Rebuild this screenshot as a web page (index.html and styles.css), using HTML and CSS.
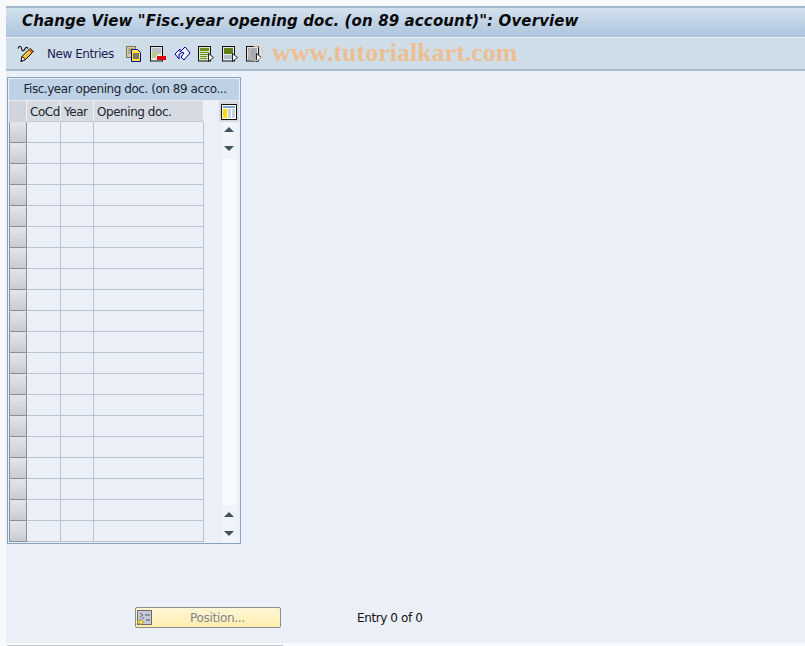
FILE: index.html
```html
<!DOCTYPE html>
<html lang="en">
<head>
<meta charset="utf-8">
<title>Change View</title>
<link rel="stylesheet" href="styles.css">
</head>
<body>
<div class="window">
  <header class="title-bar"><h1>Change View "Fisc.year opening doc. (on 89 account)": Overview</h1></header>
  <div class="toolbar">
    <svg class="ico-pen" width="18" height="18" viewBox="0 0 18 18"><path d="M4 16.500l1-5 8-8 3.500 3-8 8z" fill="#f7bd30" stroke="#111"/><path d="M4 16.500l1-5 3.500 3z" fill="#fff" stroke="#111"/><path d="M7 11l6-6" stroke="#fbe08a"/><path d="M12.500 4.500l3 3" stroke="#c0561c" stroke-width="2"/><path d="M1 3.500c1-3 3-3 3.500 0s2 3 3 1 2-3 3.500-1" fill="none" stroke="#111" stroke-width="1.200"/></svg>
    <span class="new-entries">New Entries</span>
    <span class="icons">
      <svg width="16" height="16" viewBox="0 0 16 16"><rect x="0.500" y="0.500" width="9" height="11" fill="#d9cc96" stroke="#74745f"/><path d="M2 3h6M2 5h6M2 7h3" stroke="#8a8a70"/><path d="M5.500 3.500h6l3 3v9h-9z" fill="#ffea3a" stroke="#00009c"/><path d="M7 8h6M7 10h6M7 12h6" stroke="#00009c"/></svg>
      <svg width="16" height="16" viewBox="0 0 16 16"><rect x="0.500" y="0.500" width="12" height="14.500" fill="#e6eaf0" stroke="#111"/><path d="M2 3h9M2 5h9" stroke="#8a93a0"/><path d="M2 7h9M2 9h5M2 11h4" stroke="#86a830"/><rect x="7" y="10" width="9" height="4" fill="#e00010"/></svg>
      <svg width="17" height="16" viewBox="0 0 17 16"><path d="M1 8l5-5v3l5-5 5 6-6 7-3-3 3-4-2-1-2 2h-1v5z" fill="#f4f6fa" stroke="#00009c" stroke-linejoin="round"/></svg>
      <svg width="16" height="16" viewBox="0 0 16 16"><rect x="0.500" y="0.500" width="12" height="14.500" fill="#dde5cc" stroke="#111"/><rect x="2" y="2" width="9" height="3" fill="#6e8f1c"/><path d="M2 6.500h9M2 8.500h9M2 10.500h7M2 12.500h7" stroke="#6e8f1c"/><path d="M10.500 7.500v8l5-4z" fill="#fff" stroke="#222"/></svg>
      <svg width="16" height="16" viewBox="0 0 16 16"><rect x="0.500" y="0.500" width="12" height="14.500" fill="#e6eaf0" stroke="#111"/><rect x="2" y="2" width="9" height="6" fill="#5f8216"/><path d="M2 10h8M2 12h8" stroke="#7890a0"/><path d="M10.500 7.500v8l5-4z" fill="#fff" stroke="#222"/></svg>
      <svg width="16" height="16" viewBox="0 0 16 16"><rect x="0.500" y="0.500" width="12" height="14.500" fill="#e6eaf0" stroke="#111"/><path d="M2 3h9M2 5h9M2 7h9M2 9h8M2 11h8M2 13h8" stroke="#667"/><path d="M10.500 7.500v8l5-4z" fill="#fff" stroke="#222"/><circle cx="10" cy="7.500" r="7" fill="none" stroke="#ecc9a6"/></svg>
    </span>
    <span class="watermark">www.tutorialkart.com</span>
  </div>
  <main class="content">
    <section class="panel">
      <div class="panel-title">Fisc.year opening doc. (on 89 acco...</div>
      <div class="panel-body">
        <div class="grid">
          <div class="row head"><span class="sel"></span><span class="c1">CoCd</span><span class="c2">Year</span><span class="c3">Opening doc.</span></div>
          <div class="row"><span class="sel"></span><span class="c1"></span><span class="c2"></span><span class="c3"></span></div>
          <div class="row"><span class="sel"></span><span class="c1"></span><span class="c2"></span><span class="c3"></span></div>
          <div class="row"><span class="sel"></span><span class="c1"></span><span class="c2"></span><span class="c3"></span></div>
          <div class="row"><span class="sel"></span><span class="c1"></span><span class="c2"></span><span class="c3"></span></div>
          <div class="row"><span class="sel"></span><span class="c1"></span><span class="c2"></span><span class="c3"></span></div>
          <div class="row"><span class="sel"></span><span class="c1"></span><span class="c2"></span><span class="c3"></span></div>
          <div class="row"><span class="sel"></span><span class="c1"></span><span class="c2"></span><span class="c3"></span></div>
          <div class="row"><span class="sel"></span><span class="c1"></span><span class="c2"></span><span class="c3"></span></div>
          <div class="row"><span class="sel"></span><span class="c1"></span><span class="c2"></span><span class="c3"></span></div>
          <div class="row"><span class="sel"></span><span class="c1"></span><span class="c2"></span><span class="c3"></span></div>
          <div class="row"><span class="sel"></span><span class="c1"></span><span class="c2"></span><span class="c3"></span></div>
          <div class="row"><span class="sel"></span><span class="c1"></span><span class="c2"></span><span class="c3"></span></div>
          <div class="row"><span class="sel"></span><span class="c1"></span><span class="c2"></span><span class="c3"></span></div>
          <div class="row"><span class="sel"></span><span class="c1"></span><span class="c2"></span><span class="c3"></span></div>
          <div class="row"><span class="sel"></span><span class="c1"></span><span class="c2"></span><span class="c3"></span></div>
          <div class="row"><span class="sel"></span><span class="c1"></span><span class="c2"></span><span class="c3"></span></div>
          <div class="row"><span class="sel"></span><span class="c1"></span><span class="c2"></span><span class="c3"></span></div>
          <div class="row"><span class="sel"></span><span class="c1"></span><span class="c2"></span><span class="c3"></span></div>
          <div class="row"><span class="sel"></span><span class="c1"></span><span class="c2"></span><span class="c3"></span></div>
          <div class="row"><span class="sel"></span><span class="c1"></span><span class="c2"></span><span class="c3"></span></div>
        </div>
        <div class="side">
          <div class="config">
            <svg width="16" height="16" viewBox="0 0 16 16"><rect width="16" height="16" fill="#111"/><rect x="1" y="1" width="14" height="14" fill="#fff"/><rect x="2" y="2" width="12" height="2" fill="#7fa6cc"/><rect x="2" y="5" width="4" height="9" fill="#ffdd00"/><rect x="7" y="5" width="3" height="9" fill="#c4d4e4"/><rect x="11" y="5" width="3" height="9" fill="#c4d4e4"/></svg>
          </div>
          <div class="scrollbar">
            <span class="sb-btn"><i class="up"></i></span>
            <span class="sb-btn"><i class="down"></i></span>
            <span class="sb-track"></span>
            <span class="sb-btn"><i class="up"></i></span>
            <span class="sb-btn"><i class="down"></i></span>
          </div>
        </div>
      </div>
    </section>
    <div class="footer-row">
      <button class="position" type="button">
        <svg width="16" height="16" viewBox="0 0 16 16"><rect x="0.500" y="0.500" width="14" height="14" fill="#c6cad8" stroke="#6a6a70"/><path d="M8 5h5M9 10h4" stroke="#556"/><path d="M3 3l3 2-3 2M6 7v2" fill="none" stroke="#667"/><path d="M0 11h3V9l4 3-4 3v-2H0z" fill="#ffe060" stroke="#a08010" stroke-width=".6"/></svg>
        <span>Position...</span>
      </button>
      <span class="entry">Entry 0 of 0</span>
    </div>
  </main>
</div>
<div class="status-line"></div>
</body>
</html>
```
FILE: styles.css
```css
* { box-sizing: border-box; }
html, body { margin: 0; padding: 0; }
body {
  width: 805px;
  height: 646px;
  overflow: hidden;
  background: #f7f9fc;
  font-family: "DejaVu Sans", "Liberation Sans", sans-serif;
  font-size: 12px;
  color: #1c2530;
}
.window {
  margin: 6px 0 0 6px;
  height: 637px;
  background: #ebf0f8;
  display: flex;
  flex-direction: column;
}
.title-bar {
  height: 32px;
  border-top: 2px solid #a4b7cb;
  background: linear-gradient(#d3e1ee, #adc4dc);
  border-bottom: 1px solid #e9eff6;
  display: flex;
  align-items: center;
  padding: 0 0 4px 16px;
}
.title-bar h1 {
  margin: 0;
  font: italic bold 15px "DejaVu Sans", Verdana, sans-serif;
  letter-spacing: .12px;
  color: #0a0a0a;
  white-space: nowrap;
}
.toolbar {
  height: 33px;
  background: #cfdde9;
  border-bottom: 2px solid #a9bccf;
  display: flex;
  align-items: center;
  padding-left: 11px;
}
.ico-pen { flex: none; }
.new-entries { margin-left: 12px; font: 12px "DejaVu Sans", sans-serif; letter-spacing: -.45px; color: #1a1f55; width: 67px; white-space: nowrap; }
.icons { display: flex; gap: 8px; margin-left: 12px; align-items: center; }
.icons svg { display: block; overflow: visible; }
.icons svg:nth-child(3) { margin-right: -1px; }
.watermark {
  margin-left: 10px;
  font: bold 26px "Liberation Serif", "Times New Roman", serif;
  color: #ecbf92;
  white-space: nowrap;
  padding-bottom: 2px;
}
.content { flex: 1; display: flex; flex-direction: column; padding: 6px 0 0 1px; }
.panel {
  width: 234px;
  height: 467px;
  border: 1px solid #86a3c2;
  padding: 1px;
}
.panel-title {
  height: 22px;
  background: #bfd2e5;
  border-bottom: 1px solid #e7edf5;
  text-align: center;
  padding-left: 2px;
  font: 12px/21px "DejaVu Sans", sans-serif;
  letter-spacing: -.45px;
  white-space: nowrap;
  color: #1c2530;
}
.panel-body { display: flex; }
.grid { width: 195px; display: flex; flex-direction: column; }
.row { display: flex; height: 21px; }
.row > span { display: block; border-right: 1px solid #b9c3d2; border-bottom: 1px solid #b9c3d2; flex: none; }
.row .sel {
  width: 18px;
  background: linear-gradient(#e2e4e8, #c8ccd2);
  border: 1px solid #8b8f96;
  border-top-color: #dfe3e8;
}
.c1 { width: 34px; }
.c2 { width: 33px; }
.c3 { width: 110px; }
.head > span {
  background: #d6dae2;
  border-bottom-color: #c2c7d0;
  border-right-color: #eef1f6;
  font: 12px/20px "DejaVu Sans", sans-serif;
  letter-spacing: -.45px;
  padding: 1px 0 0 3px;
  white-space: nowrap;
  overflow: hidden;
}
.head .sel { background: #d0d4dc; border: 0; border-right: 1px solid #eef1f6; }
.side { width: 34px; display: flex; flex-direction: column; align-items: center; padding-left: 16px; }
.config { width: 20px; height: 21px; background: #d6dae2; display: flex; align-items: center; justify-content: center; }
.config svg { display: block; }
.scrollbar { width: 15px; height: 420px; display: flex; flex-direction: column; gap: 1px; }
.sb-btn { height: 17px; background: #f1f5fa; display: flex; align-items: center; justify-content: center; flex: none; }
.sb-btn .up { margin-bottom: 2px; }
.sb-track { flex: 1; background: #f7f9fc; }
.up, .down { display: block; width: 0; height: 0; border-left: 5px solid transparent; border-right: 5px solid transparent; }
.up { border-bottom: 5px solid #3f5566; }
.down { border-top: 5px solid #3f5566; }
.footer-row { display: flex; align-items: center; margin-top: 63px; padding-left: 128px; }
.position {
  width: 146px;
  height: 21px;
  padding: 0 0 0 1px;
  border: 1px solid #8d8d85;
  border-radius: 2px;
  background: linear-gradient(#fff6d6, #ffeeb0);
  display: flex;
  align-items: center;
  font: 12px "DejaVu Sans", sans-serif;
  letter-spacing: -.3px;
  color: #80858c;
}
.position svg { flex: none; }
.position span { margin-left: 37px; }
.entry { margin-left: 76px; font: 12px "DejaVu Sans", sans-serif; letter-spacing: -.4px; color: #111; }
.status-line { margin: 2px 0 0 7px; width: 276px; height: 1px; background: #c4c8ce; }
```
